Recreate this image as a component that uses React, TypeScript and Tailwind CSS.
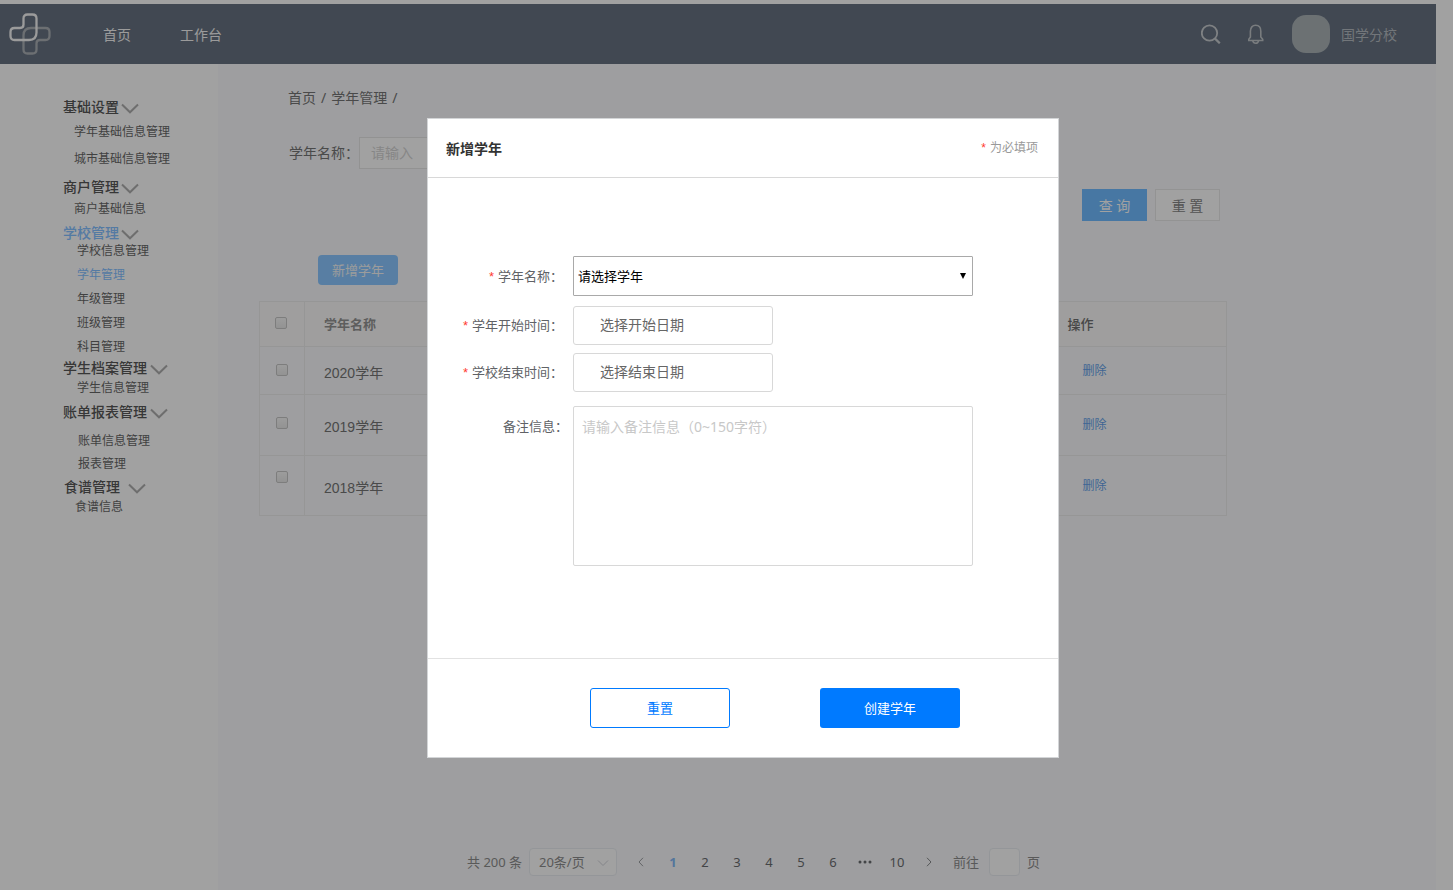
import type { ReactNode } from "react";

type Group = {
  title: string;
  spacing: string;
  listSpacing: string;
  arrowGap: string;
  active?: boolean;
  items: string[];
};

const groups: Group[] = [
  {
    title: "基础设置",
    spacing: "pl-[63px]",
    listSpacing: "gap-[11px] pt-2 pl-[11px]",
    arrowGap: "ml-[2px]",
    items: ["学年基础信息管理", "城市基础信息管理"],
  },
  {
    title: "商户管理",
    spacing: "mt-[11px] pl-[63px]",
    listSpacing: "pt-[5px] pl-[11px]",
    arrowGap: "ml-[2px]",
    items: ["商户基础信息"],
  },
  {
    title: "学校管理",
    spacing: "mt-[7px] pl-[63px]",
    listSpacing: "gap-2 pt-px pl-[14px]",
    arrowGap: "ml-[2px]",
    active: true,
    items: ["学校信息管理", "学年管理", "年级管理", "班级管理", "科目管理"],
  },
  {
    title: "学生档案管理",
    spacing: "mt-1 pl-[63px]",
    listSpacing: "pt-[3px] pl-[14px]",
    arrowGap: "ml-[3px]",
    items: ["学生信息管理"],
  },
  {
    title: "账单报表管理",
    spacing: "mt-[7px] pl-[63px]",
    listSpacing: "gap-[7px] pt-3 pl-[15px]",
    arrowGap: "ml-[3px]",
    items: ["账单信息管理", "报表管理"],
  },
  {
    title: "食谱管理",
    spacing: "mt-[6px] pl-[64px]",
    listSpacing: "pt-[3px] pl-[11px]",
    arrowGap: "ml-2",
    items: ["食谱信息"],
  },
];

const rows = [
  { name: "2020学年", height: "h-12", boxPad: "pb-[2px]" },
  { name: "2019学年", height: "h-[61px]", boxPad: "pb-1" },
  { name: "2018学年", height: "h-[60px]", boxPad: "pb-[18px]" },
];

const checkboxClass =
  "block size-3 appearance-none rounded-[2px] border border-[#c4c4c4] bg-linear-to-b from-[#f4f4f4] to-[#e6e6e6] checked:bg-[#70baff]";

function Logo() {
  return (
    <svg viewBox="0 0 42 42" className="size-[42px]" fill="none" strokeWidth="2.3" aria-hidden="true">
      <path
        stroke="#a9aeb3"
        d="M22 15H36.5Q40.5 15 40.5 19V23Q40.5 27 36.5 27H31Q27.5 27 27.5 30.5V36.5Q27.5 40.5 23.500 40.500H18.500Q14.500 40.500 14.500 36.500V22.500Q14.500 15 22 15Z"
      />
      <path
        stroke="#f2f2f2"
        d="M19 1.500H23.500Q27.500 1.500 27.500 5.500V19.500Q27.500 27 20 27H5.500Q1.500 27 1.500 23V19Q1.500 15 5.500 15H11Q14.500 15 14.500 11.500V5.500Q14.500 1.500 18.500 1.500Z"
      />
    </svg>
  );
}

function Arrow({ className }: { className: string }) {
  return (
    <svg viewBox="0 0 18 12" className={`h-3 w-[18px] ${className}`} fill="none" stroke="#adadad" strokeWidth="2" aria-hidden="true">
      <path d="M1 1.500 9 9.300 17 1.500" />
    </svg>
  );
}

function Sidebar() {
  return (
    <nav className="w-[218px] shrink-0 bg-[#fcfcfc] pt-[34px]">
      {groups.map((g) => (
        <div key={g.title} className={g.spacing}>
          <div className="flex h-[18px] items-center">
            <a href="#" className={`text-sm leading-[18px] font-medium ${g.active ? "text-[#84bfff]" : "text-[#565656]"}`}>
              {g.title}
            </a>
            <Arrow className={`mt-1 ${g.arrowGap}`} />
          </div>
          <ul className={`flex flex-col text-xs leading-4 ${g.listSpacing}`}>
            {g.items.map((item) => (
              <li key={item}>
                <a href="#" className={item === "学年管理" ? "text-[#84bfff]" : "text-[#666666]"}>
                  {item}
                </a>
              </li>
            ))}
          </ul>
        </div>
      ))}
    </nav>
  );
}

function Header() {
  return (
    <header className="flex h-[60px] items-center bg-[#667180] pr-[39px] pl-[9px]">
      <Logo />
      <nav className="ml-[52px] flex gap-[49px] pt-[2px] text-sm text-[#f2f2f2]">
        <a href="#">首页</a>
        <a href="#">工作台</a>
      </nav>
      <div className="ml-auto flex items-center">
        <button aria-label="搜索">
          <svg viewBox="0 0 20 20" className="size-5" fill="none" stroke="#c6cacd" strokeWidth="1.800" aria-hidden="true">
            <circle cx="8.500" cy="9" r="7.700" />
            <path d="M14 14.600 18.800 19.300" strokeWidth="2.200" />
          </svg>
        </button>
        <button aria-label="通知" className="ml-[27px]">
          <svg viewBox="0 0 16 20" className="h-5 w-4" fill="none" stroke="#bdc2c6" strokeWidth="1.600" aria-hidden="true">
            <path d="M2.400 13V7.200C2.400 3.500 4.500 1.300 7.600 1.300s5.200 2.200 5.200 5.900V13L14.700 15.200V16.500H.8V15.200Z" />
            <path d="M4.800 16.800Q5.300 19.200 7.700 19.200T10.500 16.800" />
          </svg>
        </button>
        <span className="ml-7 size-[38px] rounded-[14px] bg-[#a9b1b5]" />
        <span className="ml-[11px] pt-[2px] text-sm text-[#b3b9bf]">国学分校</span>
      </div>
    </header>
  );
}

function Pagination() {
  return (
    <div className="mt-auto flex h-7 items-center pl-[249px] text-[13px] text-[#8c8c8c]">
      <span className="w-[62px] pt-px">共 200 条</span>
      <div className="relative">
        <select
          aria-label="每页条数"
          className="h-7 w-[88px] appearance-none rounded border border-[#e8ebf0] bg-[#fcfcfc] pt-[2px] pl-[9px] text-[13px] text-[#8c8c8c]"
        >
          <option>20条/页</option>
        </select>
        <svg viewBox="0 0 12 8" className="pointer-events-none absolute top-[11px] right-2 h-2 w-3" fill="none" stroke="#d0d3d8" aria-hidden="true">
          <path d="M1 1.500 6 6.500 11 1.500" />
        </svg>
      </div>
      <div className="ml-2 flex text-[#6a6c70]">
        <button aria-label="上一页" className="grid h-7 w-8 place-items-center">
          <svg viewBox="0 0 8 10" className="h-2.5 w-2" fill="none" stroke="#9a9ca0" aria-hidden="true">
            <path d="M6 .8 2 5 6 9.200" />
          </svg>
        </button>
        {[1, 2, 3, 4, 5, 6].map((n) => (
          <button key={n} className={`h-7 w-8 pt-[2px] ${n === 1 ? "font-bold text-[#84b8f5]" : ""}`}>
            {n}
          </button>
        ))}
        <button aria-label="更多页" className="grid h-7 w-8 place-items-center">
          <svg viewBox="0 0 14 4" className="h-1 w-3.5" fill="#6a6c70" aria-hidden="true">
            <circle cx="2" cy="2" r="1.500" />
            <circle cx="7" cy="2" r="1.500" />
            <circle cx="12" cy="2" r="1.500" />
          </svg>
        </button>
        <button className="h-7 w-8 pt-[2px]">10</button>
        <button aria-label="下一页" className="grid h-7 w-8 place-items-center">
          <svg viewBox="0 0 8 10" className="h-2.5 w-2" fill="none" stroke="#85878a" aria-hidden="true">
            <path d="M2 .8 6 5 2 9.200" />
          </svg>
        </button>
      </div>
      <label htmlFor="page" className="ml-2 pt-[2px]">
        前往
      </label>
      <input id="page" className="ml-[10px] h-7 w-[31px] rounded border border-[#e8ebf0] bg-[#fcfcfc]" />
      <span className="ml-[7px] pt-[2px]">页</span>
    </div>
  );
}

function Content() {
  return (
    <main className="flex min-w-0 grow flex-col bg-[#f7f8fa] pb-[14px]">
      <div className="flex gap-[5px] pt-6 pl-[70px] text-sm leading-5 text-[#747474]">
        <a href="#">首页</a>
        <span>/</span>
        <a href="#">学年管理</a>
        <span>/</span>
      </div>
      <div className="mt-[29px] flex items-center pl-[71px] text-sm">
        <label htmlFor="query" className="w-[70px] text-[#747474]">
          学年名称：
        </label>
        <input
          id="query"
          placeholder="请输入"
          className="h-8 w-[200px] border border-[#e4e4e4] bg-[#fcfcfc] px-[11px] pb-[2px] placeholder:text-[#d2d2d2]"
        />
      </div>
      <div className="mt-5 flex gap-2 pl-[864px] text-sm">
        <button className="h-8 w-[65px] bg-[#70baff] pt-[2px] text-[#fcfcfc]">查 询</button>
        <button className="h-8 w-[65px] border border-[#e6e6e6] bg-[#fcfcfc] pt-[2px] text-[#858585]">重 置</button>
      </div>
      <div className="mt-[34px] pl-[100px]">
        <button className="block h-[30px] w-20 rounded bg-[#8ac6ff] pt-[2px] text-[13px] text-[#f4f4f4]">新增学年</button>
      </div>
      <div className="mt-4 mr-[209px] ml-[41px]">
        <table className="w-full table-fixed border-collapse border border-[#ebebeb] text-left text-sm">
          <thead>
            <tr className="h-[45px] border-b border-[#ebebeb] bg-[#f9f8f7] text-[13px]">
              <th className="w-[45px] border-r border-[#ebebeb] pb-[2px] pl-[15px]">
                <input type="checkbox" aria-label="全选" className={checkboxClass} />
              </th>
              <th className="pl-[19px] font-bold text-[#929292]">学年名称</th>
              <th className="w-[179px] pl-5 font-medium text-[#707070]">操作</th>
            </tr>
          </thead>
          <tbody>
            {rows.map((r) => (
              <tr key={r.name} className={`border-b border-[#ebebeb] ${r.height}`}>
                <td className={`border-r border-[#ebebeb] pl-4 ${r.boxPad}`}>
                  <input type="checkbox" aria-label={r.name} className={checkboxClass} />
                </td>
                <td className="pt-1 pl-[19px] font-['Liberation_Sans','Noto_Sans_CJK_SC',sans-serif] text-[#747474]">
                  {r.name}
                </td>
                <td className="pl-[35px]">
                  <a href="#" className="block text-xs text-[#649fe8]">
                    删除
                  </a>
                </td>
              </tr>
            ))}
          </tbody>
        </table>
      </div>
      <Pagination />
    </main>
  );
}

function Asterisk() {
  return <span className="mr-1 font-['Liberation_Sans',sans-serif] text-[#ff3b30]">*</span>;
}

function FieldLabel({ htmlFor, children }: { htmlFor: string; children: ReactNode }) {
  return (
    <label htmlFor={htmlFor} className="w-[145px] shrink-0 pt-px pr-[10px] text-right text-[#606266]">
      <Asterisk />
      {children}
    </label>
  );
}

function Dialog() {
  const dateClass =
    "h-[39px] w-[200px] rounded-[3px] border border-[#d8d8d8] pb-[2px] pl-[26px] text-sm placeholder:text-[#666666]";
  return (
    <section
      role="dialog"
      aria-modal="true"
      aria-labelledby="dialog-title"
      className="w-[632px] border border-[#d3d5d7] bg-white text-[13px]"
    >
      <div className="flex h-[59px] items-center justify-between border-b border-[#d8d8d8] pr-5 pl-[18px]">
        <h2 id="dialog-title" className="pt-[2px] text-sm font-bold text-[#333333]">
          新增学年
        </h2>
        <p className="text-xs text-[#999999]">
          <Asterisk />
          为必填项
        </p>
      </div>
      <form className="pt-[78px] pb-[92px]" onSubmit={(e) => e.preventDefault()}>
        <div className="flex items-center">
          <FieldLabel htmlFor="year">学年名称：</FieldLabel>
          <div className="relative">
            <select
              id="year"
              className="h-10 w-[400px] appearance-none rounded-[1px] border border-[#a9a9a9] bg-white pt-[2px] pl-1 text-[13px] text-black"
            >
              <option>请选择学年</option>
            </select>
            <svg viewBox="0 0 6 6" className="pointer-events-none absolute top-[17px] right-[7px] size-[6px]" aria-hidden="true">
              <path d="M0 0H6L3 6Z" />
            </svg>
          </div>
        </div>
        <div className="mt-[10px] flex items-center">
          <FieldLabel htmlFor="start">学年开始时间：</FieldLabel>
          <input id="start" placeholder="选择开始日期" className={dateClass} />
        </div>
        <div className="mt-2 flex items-center">
          <FieldLabel htmlFor="end">学校结束时间：</FieldLabel>
          <input id="end" placeholder="选择结束日期" className={dateClass} />
        </div>
        <div className="mt-[14px] flex items-start">
          <label htmlFor="remark" className="w-[145px] shrink-0 pt-[10px] pr-[5px] text-right leading-5 text-[#606266]">
            备注信息：
          </label>
          <textarea
            id="remark"
            placeholder="请输入备注信息（0~150字符）"
            className="block h-40 w-[400px] resize-none rounded-[2px] border border-[#d8d8d8] px-2 py-[10px] text-sm leading-5 placeholder:text-[#c8c8c8]"
          />
        </div>
      </form>
      <div className="flex justify-end gap-[90px] border-t border-[#e2e2e2] py-[29px] pr-[98px]">
        <button className="h-10 w-[140px] rounded-[3px] border border-[#007aff] pt-[2px] text-[#007aff]">重置</button>
        <button className="h-10 w-[140px] rounded-[3px] bg-[#007aff] pt-[2px] text-white">创建学年</button>
      </div>
    </section>
  );
}

export default function App() {
  return (
    <div lang="zh-CN" className="bg-[#fcfcfc] font-['Noto_Sans','Noto_Sans_CJK_SC',sans-serif]">
      <div className="flex min-h-screen flex-col pt-1 pr-[17px]">
        <Header />
        <div className="flex grow">
          <Sidebar />
          <Content />
        </div>
      </div>
      <div className="fixed inset-0 flex items-center justify-center bg-black/36 pb-[14px] pl-[33px]">
        <Dialog />
      </div>
    </div>
  );
}
